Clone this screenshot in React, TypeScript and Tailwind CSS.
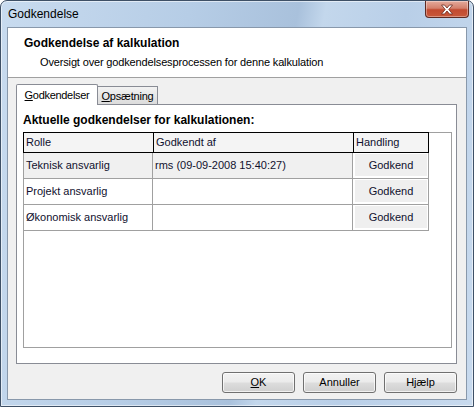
import React from 'react';

const rows = [
  { role: 'Teknisk ansvarlig', by: 'rms (09-09-2008 15:40:27)', active: true },
  { role: 'Projekt ansvarlig', by: '', active: false },
  { role: 'Økonomisk ansvarlig', by: '', active: false },
];

const CloseGlyph = () => (
  <svg width="14" height="11" viewBox="0 0 14 11">
    <path
      d="M1.5 1 H4.5 L7 4 L9.5 1 H12.5 L8.8 5.5 L12.5 10 H9.5 L7 7 L4.5 10 H1.5 L5.2 5.5 Z"
      fill="#ffffff"
      stroke="#6b2a20"
      strokeWidth="0.8"
      strokeLinejoin="round"
    />
  </svg>
);

const DialogButton = ({ children }: { children: React.ReactNode }) => (
  <button className="flex h-[21px] w-[73px] items-center justify-center rounded-[3px] border border-[#707070] bg-[linear-gradient(#f2f2f2_0%,#ebebeb_48%,#dddddd_52%,#cfcfcf_100%)] text-[11px] leading-none text-black shadow-[inset_0_0_0_1px_rgba(255,255,255,0.7)]">
    {children}
  </button>
);

export default function App() {
  return (
    <div className="h-[407px] w-[474px] bg-white font-['Liberation_Sans',Arial,sans-serif]">
      <div className="relative flex h-full w-full flex-col rounded-t-[7px] border border-[#3e5066] bg-[linear-gradient(100deg,#c8dbef_0%,#b6cde6_35%,#a9c1dc_55%,#c3d7ec_60%,#b9cfe8_75%,#c8daee_100%)] shadow-[inset_0_0_0_1px_rgba(255,255,255,0.55)]">
        {/* title bar */}
        <div className="flex h-[26px] items-center pl-[7px] text-[12px] text-black">Godkendelse</div>
        <button className="absolute right-[4px] top-0 flex h-[17px] w-[44px] items-center justify-center rounded-b-[4px] border border-t-0 border-[#5e2a22] bg-[linear-gradient(#e4aa9c_0%,#d4806c_45%,#c24a30_55%,#c8583a_100%)] shadow-[inset_0_0_0_1px_rgba(255,255,255,0.35)]">
          <CloseGlyph />
        </button>

        {/* client area */}
        <div className="mx-[6px] mb-[6px] flex flex-1 flex-col border border-[#8898ab] bg-[#f0f0f0]">
          <div className="h-[50px] border-b border-[#a0a0a0] bg-white pl-[16px] pt-[8px]">
            <div className="text-[12px] font-bold leading-[14px] text-black">Godkendelse af kalkulation</div>
            <div className="mt-[5px] pl-[16px] text-[11px] leading-[14px] tracking-[-0.15px] text-black">
              Oversigt over godkendelsesprocessen for denne kalkulation
            </div>
          </div>

          <div className="flex flex-1 flex-col pl-[8px] pr-[9px] pt-[6px]">
            {/* tabs */}
            <div className="flex h-[20px] items-end text-[11px] leading-none text-black">
              <div className="relative z-10 -mb-px flex h-[21px] w-[82px] items-center justify-center rounded-t-[2px] border border-b-0 border-[#898c95] bg-white pt-[1px] tracking-[-0.3px]">
                <span>
                  <u>G</u>odkendelser
                </span>
              </div>
              <div className="flex h-[18px] w-[60px] items-center justify-center border border-b-0 border-l-0 border-[#898c95] bg-[linear-gradient(#f2f2f2,#dcdcdc)] pt-[2px] tracking-[-0.2px]">
                <span>
                  <u>O</u>psætning
                </span>
              </div>
            </div>

            {/* tab page */}
            <div className="flex h-[260px] flex-col border border-[#898c95] bg-white pb-[15px] pl-[6px] pr-[4px] pt-[8px]">
              <div className="text-[12px] font-bold leading-[14px] text-black">Aktuelle godkendelser for kalkulationen:</div>
              <div className="mt-[5px] flex-1 border border-[#a0a0a0] bg-white text-[11px] text-[#10102e]">
                <div className="-ml-px -mt-px flex h-[21px] w-[406px] border border-black bg-[#f4f4f4] leading-[19px]">
                  <div className="w-[130px] border-r border-black pl-[2px]">Rolle</div>
                  <div className="w-[200px] border-r border-black pl-[2px]">Godkendt af</div>
                  <div className="flex-1 pl-[2px]">Handling</div>
                </div>
                {rows.map((r, i) => (
                  <div key={i} className="flex h-[26px] w-[405px] border-b border-[#a0a0a0]">
                    <div className={`flex w-[129px] items-center border-r border-[#a0a0a0] pl-[2px] ${r.active ? 'bg-[#f0f0f0]' : 'bg-white'}`}>
                      {r.role}
                    </div>
                    <div className={`flex w-[200px] items-center border-r border-[#a0a0a0] pl-[2px] ${r.active ? 'bg-[#f0f0f0]' : 'bg-white'}`}>
                      {r.by}
                    </div>
                    <div className="flex-1 border-r border-[#a0a0a0] pb-[2px] pl-[2px] pr-[1px] pt-[1px]">
                      <div className="flex h-full items-center justify-center bg-[#efefef]">Godkend</div>
                    </div>
                  </div>
                ))}
              </div>
            </div>

            {/* dialog buttons */}
            <div className="mt-[8px] flex justify-end gap-[8px]">
              <DialogButton>
                <u>O</u>K
              </DialogButton>
              <DialogButton>Annuller</DialogButton>
              <DialogButton>Hjælp</DialogButton>
            </div>
          </div>
        </div>
      </div>
    </div>
  );
}
